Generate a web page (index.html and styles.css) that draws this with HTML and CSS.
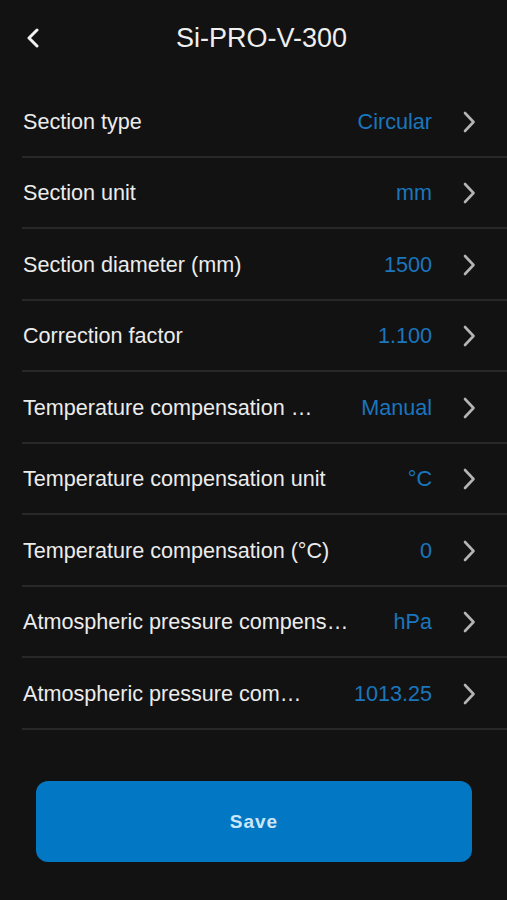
FILE: index.html
```html
<!DOCTYPE html>
<html lang="en">
<head>
<meta charset="utf-8">
<title>Si-PRO-V-300</title>
<link rel="stylesheet" href="styles.css">
</head>
<body>
<div class="screen">
  <header class="topbar">
    <button class="back" aria-label="Back">
      <svg width="14" height="20" viewBox="0 0 14 20"><path d="M11 2 L3 10 L11 18" fill="none" stroke="#f2f2f2" stroke-width="3" stroke-linecap="round" stroke-linejoin="round"/></svg>
    </button>
    <h1 class="title">Si-PRO-V-300</h1>
    <span class="spacer"></span>
  </header>
  <ul class="list">
    <li class="row"><span class="label">Section type</span><span class="value">Circular</span><svg class="chev" width="16" height="22" viewBox="0 0 16 22"><path d="M4 2 L12.5 11 L4 20" fill="none" stroke="#b4b4b4" stroke-width="2.6" stroke-linecap="round" stroke-linejoin="round"/></svg></li>
    <li class="row"><span class="label">Section unit</span><span class="value">mm</span><svg class="chev" width="16" height="22" viewBox="0 0 16 22"><path d="M4 2 L12.5 11 L4 20" fill="none" stroke="#b4b4b4" stroke-width="2.6" stroke-linecap="round" stroke-linejoin="round"/></svg></li>
    <li class="row"><span class="label">Section diameter (mm)</span><span class="value">1500</span><svg class="chev" width="16" height="22" viewBox="0 0 16 22"><path d="M4 2 L12.5 11 L4 20" fill="none" stroke="#b4b4b4" stroke-width="2.6" stroke-linecap="round" stroke-linejoin="round"/></svg></li>
    <li class="row"><span class="label">Correction factor</span><span class="value">1.100</span><svg class="chev" width="16" height="22" viewBox="0 0 16 22"><path d="M4 2 L12.5 11 L4 20" fill="none" stroke="#b4b4b4" stroke-width="2.6" stroke-linecap="round" stroke-linejoin="round"/></svg></li>
    <li class="row"><span class="label">Temperature compensation …</span><span class="value">Manual</span><svg class="chev" width="16" height="22" viewBox="0 0 16 22"><path d="M4 2 L12.5 11 L4 20" fill="none" stroke="#b4b4b4" stroke-width="2.6" stroke-linecap="round" stroke-linejoin="round"/></svg></li>
    <li class="row"><span class="label">Temperature compensation unit</span><span class="value">°C</span><svg class="chev" width="16" height="22" viewBox="0 0 16 22"><path d="M4 2 L12.5 11 L4 20" fill="none" stroke="#b4b4b4" stroke-width="2.6" stroke-linecap="round" stroke-linejoin="round"/></svg></li>
    <li class="row"><span class="label">Temperature compensation (°C)</span><span class="value">0</span><svg class="chev" width="16" height="22" viewBox="0 0 16 22"><path d="M4 2 L12.5 11 L4 20" fill="none" stroke="#b4b4b4" stroke-width="2.6" stroke-linecap="round" stroke-linejoin="round"/></svg></li>
    <li class="row"><span class="label">Atmospheric pressure compens…</span><span class="value">hPa</span><svg class="chev" width="16" height="22" viewBox="0 0 16 22"><path d="M4 2 L12.5 11 L4 20" fill="none" stroke="#b4b4b4" stroke-width="2.6" stroke-linecap="round" stroke-linejoin="round"/></svg></li>
    <li class="row"><span class="label">Atmospheric pressure com…</span><span class="value">1013.25</span><svg class="chev" width="16" height="22" viewBox="0 0 16 22"><path d="M4 2 L12.5 11 L4 20" fill="none" stroke="#b4b4b4" stroke-width="2.6" stroke-linecap="round" stroke-linejoin="round"/></svg></li>
  </ul>
  <div class="actions">
    <button class="save">Save</button>
  </div>
</div>
</body>
</html>
```

FILE: styles.css
```css
* { box-sizing: border-box; }
html, body {
  margin: 0;
  padding: 0;
  background: #121212;
  font-family: "Liberation Sans", Arial, sans-serif;
}
.screen {
  width: 507px;
  height: 900px;
  background: #121212;
  display: flex;
  flex-direction: column;
}
.topbar {
  height: 76px;
  display: flex;
  align-items: center;
}
.back {
  width: 50px;
  height: 40px;
  padding: 0 0 0 26px;
  background: none;
  border: none;
  display: flex;
  align-items: center;
}
.title {
  flex: 1;
  margin: 0;
  text-align: center;
  font-size: 27px;
  font-weight: 400;
  color: #efefef;
}
.spacer { width: 34px; }
.list {
  list-style: none;
  margin: 10px 0 0 0;
  padding: 0 0 0 22px;
}
.row {
  height: 71.5px;
  display: flex;
  align-items: center;
  padding: 2px 30px 0 0;
  border-bottom: 2px solid #282828;
}
.label {
  flex: 1;
  font-size: 21.6px;
  color: #ececec;
  white-space: nowrap;
  padding-left: 1px;
}
.value {
  font-size: 21.6px;
  color: #1a76bd;
  white-space: nowrap;
}
.chev {
  margin-left: 29px;
  flex: none;
}
.actions {
  padding: 51px 35px 0 36px;
}
.save {
  width: 100%;
  height: 81px;
  padding-top: 3px;
  border: none;
  border-radius: 12px;
  background: #0277c4;
  color: #cde6f8;
  font-family: "Liberation Sans", Arial, sans-serif;
  font-size: 19px;
  font-weight: 700;
  letter-spacing: 1px;
}
```
